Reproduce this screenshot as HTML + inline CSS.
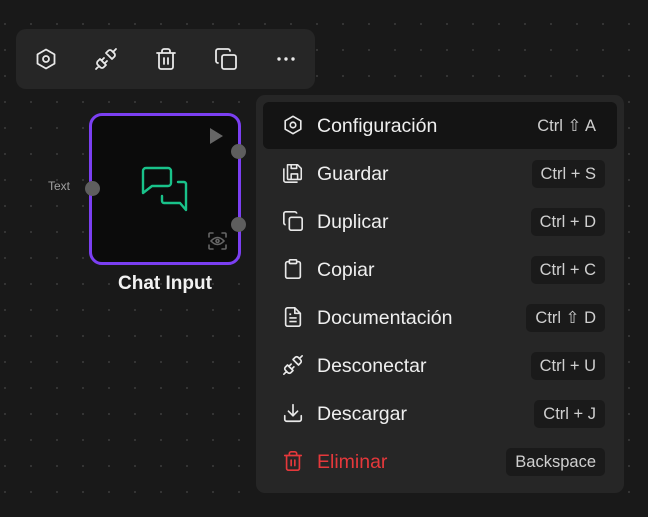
<!DOCTYPE html>
<html><head><meta charset="utf-8"><style>
*{margin:0;padding:0;box-sizing:border-box}
body{width:648px;height:517px;overflow:hidden;background:#191919;font-family:"Liberation Sans",sans-serif;position:relative;
background-image:radial-gradient(circle,#3c3c3c 0.8px,transparent 1.1px);background-size:26px 26px;background-position:-8px 11px}
.tb{position:absolute;left:16px;top:29px;width:299px;height:60px;background:#262626;border-radius:10px}
.tb svg{position:absolute;top:18px}
.node{position:absolute;left:89px;top:113px;width:152px;height:152px;border:3px solid #7b3ff2;border-radius:13px;background:#0b0b0b}
.h{position:absolute;width:15px;height:15px;border-radius:50%;background:#5e5e5e}
.lbl{position:absolute;color:#f2f2f2;font-weight:bold;font-size:19px;left:89px;width:152px;text-align:center;top:273px}
.menu{position:absolute;left:256px;top:95px;width:368px;height:398px;background:#262626;border-radius:9px}
.row{position:absolute;left:7px;width:354px;height:47px;border-radius:6px}
.row.sel{background:#141414}
.row svg{position:absolute;left:19px;top:12px}
.row .t{position:absolute;left:54px;top:13px;font-size:19.5px;color:#efefef}
.k{position:absolute;right:12px;top:10px;height:28px;line-height:28px;padding:0 9px;border-radius:5px;background:#1a1a1a;color:#cfcfcf;font-size:16.5px}
.sel .k{background:none}
</style></head><body>
<div class="tb">
<svg style="left:18px" width="24" height="24" viewBox="0 0 24 24" fill="none" stroke="#e8e8e8" stroke-width="1.8" stroke-linejoin="round"><path d="M12 2.5l8.5 4.9v9.2L12 21.5l-8.5-4.9V7.4z"/><circle cx="12" cy="12" r="3"/></svg>
<svg style="left:78px" width="24" height="24" viewBox="0 0 24 24" fill="none" stroke="#e8e8e8" stroke-width="1.8" stroke-linecap="round" stroke-linejoin="round"><path d="m19 5 3-3M2 22l3-3M6.3 20.3a2.4 2.4 0 0 0 3.4 0L12 18l-6-6-2.3 2.3a2.4 2.4 0 0 0 0 3.4ZM7.5 13.5 10 11M10.5 16.5 13 14M12 6l6 6 2.3-2.3a2.4 2.4 0 0 0 0-3.4l-2.6-2.6a2.4 2.4 0 0 0-3.4 0Z"/></svg>
<svg style="left:138px" width="24" height="24" viewBox="0 0 24 24" fill="none" stroke="#e8e8e8" stroke-width="1.8" stroke-linecap="round"><path d="M3 6h18M19 6v14a2 2 0 0 1-2 2H7a2 2 0 0 1-2-2V6M8 6V4a2 2 0 0 1 2-2h4a2 2 0 0 1 2 2v2M10 11v6M14 11v6"/></svg>
<svg style="left:198px" width="24" height="24" viewBox="0 0 24 24" fill="none" stroke="#e8e8e8" stroke-width="1.8" stroke-linecap="round"><rect x="8" y="8" width="14" height="14" rx="2"/><path d="M4 16a2 2 0 0 1-2-2V4a2 2 0 0 1 2-2h10a2 2 0 0 1 2 2"/></svg>
<svg style="left:258px" width="24" height="24" viewBox="0 0 24 24" fill="#e8e8e8"><circle cx="5" cy="12" r="1.7"/><circle cx="12" cy="12" r="1.7"/><circle cx="19" cy="12" r="1.7"/></svg>
</div>
<div style="position:absolute;left:48px;top:179px;color:#a0a0a0;font-size:12px">Text</div>
<div class="node"></div>
<div class="h" style="left:85px;top:181px"></div>
<div class="h" style="left:231px;top:144px"></div>
<div class="h" style="left:231px;top:217px"></div>
<svg style="position:absolute;left:0;top:0" width="648" height="517">
<path d="M210 128v16l13-8z" fill="#666"/>
<g fill="none" stroke="#19c28a" stroke-width="2.4" stroke-linejoin="round" stroke-linecap="round">
<path d="M143 193V171a3 3 0 0 1 3-3H168a3 3 0 0 1 3 3V183a3 3 0 0 1-3 3H152Z"/>
<path d="M178 182h6a2 2 0 0 1 2 2V210L180 203H164a2 2 0 0 1-2-2V196"/>
</g>
<g fill="none" stroke="#666" stroke-width="1.6" stroke-linecap="round"><path d="M209 237v-3a1 1 0 0 1 1-1h3M222 233h3a1 1 0 0 1 1 1v3M226 245v3a1 1 0 0 1-1 1h-3M213 249h-3a1 1 0 0 1-1-1v-3"/><path d="M211 241q6.5-7 13 0q-6.5 7-13 0z"/><circle cx="217.5" cy="241" r="1.5"/></g>
</svg>
<div class="lbl">Chat Input</div>
<div class="menu">
<div class="row sel" style="top:7px"><svg width="22" height="22" viewBox="0 0 24 24" fill="none" stroke="#e8e8e8" stroke-width="1.8" stroke-linejoin="round"><path d="M12 2.5l8.5 4.9v9.2L12 21.5l-8.5-4.9V7.4z"/><circle cx="12" cy="12" r="3"/></svg><span class="t">Configuración</span><span class="k">Ctrl ⇧ A</span></div>
<div class="row" style="top:55px"><svg width="22" height="22" viewBox="0 0 24 24" fill="none" stroke="#e8e8e8" stroke-width="1.7" stroke-linejoin="round"><path d="M2 7v13a2 2 0 0 0 2 2h13"/><path d="M6 3h11l4 4v11a1 1 0 0 1-1 1H7a1 1 0 0 1-1-1z"/><path d="M10 19v-6h7v6M10 3v4h6V3"/></svg><span class="t">Guardar</span><span class="k">Ctrl + S</span></div>
<div class="row" style="top:103px"><svg width="22" height="22" viewBox="0 0 24 24" fill="none" stroke="#e8e8e8" stroke-width="1.8"><rect x="8" y="8" width="14" height="14" rx="2"/><path d="M4 16a2 2 0 0 1-2-2V4a2 2 0 0 1 2-2h10a2 2 0 0 1 2 2"/></svg><span class="t">Duplicar</span><span class="k">Ctrl + D</span></div>
<div class="row" style="top:151px"><svg width="22" height="22" viewBox="0 0 24 24" fill="none" stroke="#e8e8e8" stroke-width="1.8"><rect x="8" y="2" width="8" height="4" rx="1"/><path d="M16 4h2a2 2 0 0 1 2 2v14a2 2 0 0 1-2 2H6a2 2 0 0 1-2-2V6a2 2 0 0 1 2-2h2"/></svg><span class="t">Copiar</span><span class="k">Ctrl + C</span></div>
<div class="row" style="top:199px"><svg width="22" height="22" viewBox="0 0 24 24" fill="none" stroke="#e8e8e8" stroke-width="1.8" stroke-linejoin="round"><path d="M14 2H6a2 2 0 0 0-2 2v16a2 2 0 0 0 2 2h12a2 2 0 0 0 2-2V8z"/><path d="M14 2v6h6M8 13h8M8 17h8M8 9h2"/></svg><span class="t">Documentación</span><span class="k">Ctrl ⇧ D</span></div>
<div class="row" style="top:247px"><svg width="22" height="22" viewBox="0 0 24 24" fill="none" stroke="#e8e8e8" stroke-width="1.8" stroke-linecap="round" stroke-linejoin="round"><path d="m19 5 3-3M2 22l3-3M6.3 20.3a2.4 2.4 0 0 0 3.4 0L12 18l-6-6-2.3 2.3a2.4 2.4 0 0 0 0 3.4ZM7.5 13.5 10 11M10.5 16.5 13 14M12 6l6 6 2.3-2.3a2.4 2.4 0 0 0 0-3.4l-2.6-2.6a2.4 2.4 0 0 0-3.4 0Z"/></svg><span class="t">Desconectar</span><span class="k">Ctrl + U</span></div>
<div class="row" style="top:295px"><svg width="22" height="22" viewBox="0 0 24 24" fill="none" stroke="#e8e8e8" stroke-width="1.8" stroke-linecap="round" stroke-linejoin="round"><path d="M21 15v4a2 2 0 0 1-2 2H5a2 2 0 0 1-2-2v-4M7 10l5 5 5-5M12 15V3"/></svg><span class="t">Descargar</span><span class="k">Ctrl + J</span></div>
<div class="row" style="top:343px"><svg width="22" height="22" viewBox="0 0 24 24" fill="none" stroke="#e5383b" stroke-width="1.8" stroke-linecap="round"><path d="M3 6h18M19 6v14a2 2 0 0 1-2 2H7a2 2 0 0 1-2-2V6M8 6V4a2 2 0 0 1 2-2h4a2 2 0 0 1 2 2v2M10 11v6M14 11v6"/></svg><span class="t" style="color:#e5383b">Eliminar</span><span class="k">Backspace</span></div>
</div>
</body></html>
